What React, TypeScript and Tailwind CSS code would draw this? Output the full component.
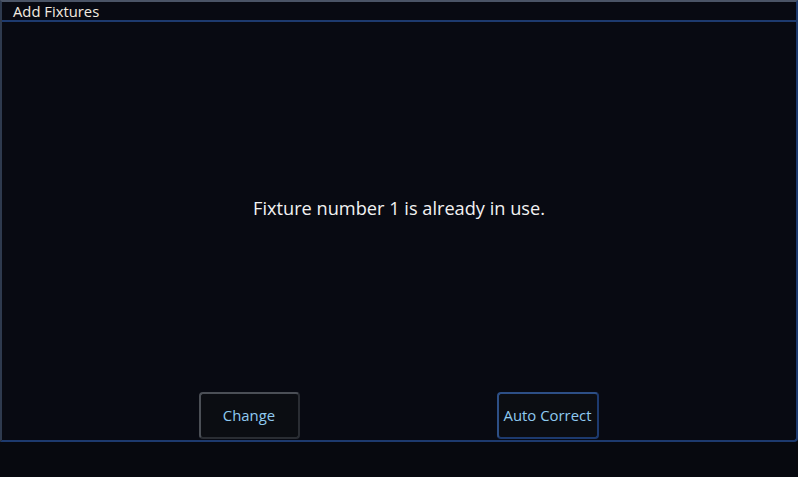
const App = () => {
  return (
    <div
      className="w-[798px] h-[477px] bg-[#07090f] overflow-hidden"
      style={{ fontFamily: '"Open Sans", "Noto Sans", sans-serif' }}
    >
      <div className="h-[442px] flex flex-col border-2 border-t-[#4a5466] border-l-[#2e3a4e] border-r-[#1d3a6e] border-b-[#1d3a6e] rounded-br-[4px] bg-[#080a12]">
        <div className="h-[20px] flex items-center pl-[11px] border-b-2 border-[#1d3a6e]">
          <span className="text-[14.8px] leading-none text-[#f3ece0]">Add Fixtures</span>
        </div>
        <div className="flex-1 flex items-center justify-center pt-[4px]">
          <p className="text-[18.2px] text-[#f2f2f2]">Fixture number 1 is already in use.</p>
        </div>
        <div className="flex justify-center gap-[197px] pb-[1px] pr-[1px]">
          <button className="w-[101px] h-[47px] rounded-[4px] border-2 border-t-[#4b4f56] border-l-[#4b4f56] border-r-[#2a2d33] border-b-[#2a2d33] bg-[#0b0d12] text-[14.9px] text-[#8fcaf0]">
            Change
          </button>
          <button className="w-[102px] h-[47px] rounded-[4px] border-2 border-t-[#2d4f86] border-l-[#2d4f86] border-r-[#1d3a6e] border-b-[#1d3a6e] bg-[#0b0d12] text-[14.9px] text-[#8fcaf0]">
            Auto Correct
          </button>
        </div>
      </div>
    </div>
  );
};

export default App;
